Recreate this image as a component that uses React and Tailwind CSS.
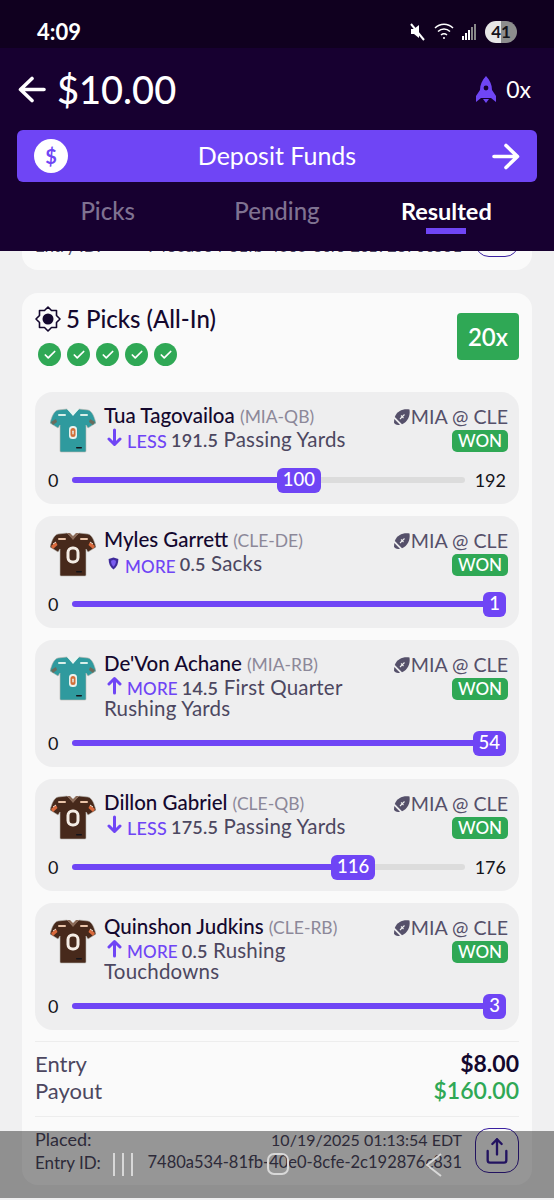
import React from 'react';
import { Check, Share } from 'lucide-react';

const picks = [
  { name: 'Tua Tagovailoa', tag: '(MIA-QB)', team: 'mia', dir: 'down', side: 'LESS', line: '191.5', stat: 'Passing Yards', value: 100, max: 192 },
  { name: 'Myles Garrett', tag: '(CLE-DE)', team: 'cle', dir: 'shield', side: 'MORE', line: '0.5', stat: 'Sacks', value: 1, max: 1 },
  { name: "De'Von Achane", tag: '(MIA-RB)', team: 'mia', dir: 'up', side: 'MORE', line: '14.5', stat: 'First Quarter Rushing Yards', value: 54, max: 54, tall: true },
  { name: 'Dillon Gabriel', tag: '(CLE-QB)', team: 'cle', dir: 'down', side: 'LESS', line: '175.5', stat: 'Passing Yards', value: 116, max: 176 },
  { name: 'Quinshon Judkins', tag: '(CLE-RB)', team: 'cle', dir: 'up', side: 'MORE', line: '0.5', stat: 'Rushing Touchdowns', value: 3, max: 3, tall: true },
];

const Jersey = ({ team }) => {
  const mia = team === 'mia';
  const body = mia ? '#2f9a9e' : '#47291b';
  const stripe = mia ? '#d9efe9' : '#e9c3a8';
  return (
    <svg width="46" height="45" viewBox="0 0 46 45" className="shrink-0">
      <path d="M8 2 L17 1 L23 6 L29 1 L38 2 C42 3 44 8 46 15 L38 20 L36 17 L36 43 Q36 44 35 44 L11 44 Q10 44 10 43 L10 17 L8 20 L0 15 C2 8 4 3 8 2 Z" fill={body} stroke="#b9b5ae" strokeWidth="0.6" />
      <path d="M17 1 L23 8 L29 1 L26 1 L23 4 L20 1 Z" fill={mia ? '#e9f5f2' : '#8a6a58'} />
      <rect x="8" y="6" width="8" height="2" rx="1" fill={stripe} />
      <rect x="30" y="6" width="8" height="2" rx="1" fill={stripe} />
      {mia ? (
        <>
          <path d="M1 14 L6 11 L7 14 L3 17 Z" fill="#6b6b5c" />
          <path d="M45 14 L40 11 L39 14 L43 17 Z" fill="#6b6b5c" />
          <rect x="19" y="18" width="8" height="13" rx="3.5" fill="#e9f2ee" />
          <rect x="20.5" y="20" width="5" height="9" rx="2.5" fill="#d2703a" />
          <rect x="22.3" y="22.5" width="1.4" height="4" rx="0.7" fill="#e9f2ee" />
        </>
      ) : (
        <>
          <path d="M1 14 L6 10 L7.5 13 L3 17 Z" fill="#d9693c" />
          <path d="M45 14 L40 10 L38.5 13 L43 17 Z" fill="#d9693c" />
          <path d="M3 12 L6 10 M43 12 L40 10" stroke="#f3e3d3" strokeWidth="1" />
          <rect x="18" y="16" width="10" height="14" rx="4.5" fill="none" stroke="#f4ece4" strokeWidth="3" />
        </>
      )}
      <rect x="26" y="39" width="6" height="1.5" rx="0.7" fill="#14141a" />
    </svg>
  );
};

const Football = () => (
  <svg width="18" height="18" viewBox="0 0 18 18" className="shrink-0">
    <path d="M16.5 1.5 C10 0.5 4 3 1.8 9 L9 16.2 C14.5 14 17.5 8 16.5 1.5 Z" fill="#55506a" />
    <path d="M1.3 11 L7 16.7 C4 17.4 1.7 16.4 1 14.8 Z" fill="#55506a" />
    <path d="M7 11 L11.5 6.5 M8 7.5 L10.5 10" stroke="#efefef" strokeWidth="1.1" />
  </svg>
);

const DirIcon = ({ dir }) => {
  if (dir === 'shield') {
    return (
      <svg width="13" height="15" viewBox="0 0 16 17" className="shrink-0 -mt-[6px]">
        <path d="M8 1 L14 3 C14 9 12 13 8 16 C4 13 2 9 2 3 Z" fill="#3f2a9a" />
        <path d="M8 4 L11 5 C11 8.5 10 10.5 8 12.5 C6 10.5 5 8.5 5 5 Z" fill="#7a5cf0" />
      </svg>
    );
  }
  return (
    <svg width="15" height="19" viewBox="0 0 15 19" className={`shrink-0 -mt-[6px] ${dir === 'down' ? '' : 'rotate-180'}`} fill="none" stroke="#6f45f5" strokeWidth="3" strokeLinecap="round" strokeLinejoin="round">
      <path d="M7.5 2 V16 M2 11 L7.5 16.5 L13 11" />
    </svg>
  );
};

const BigArrow = ({ flip }) => (
  <svg width="28" height="27" viewBox="0 0 28 27" className={`shrink-0 ${flip ? 'rotate-180' : ''}`} fill="none" stroke="#fff" strokeWidth="3.6" strokeLinecap="round" strokeLinejoin="round">
    <path d="M14 2.5 L2.5 13.5 L14 24.5 M2.5 13.5 H26" />
  </svg>
);

const Slider = ({ value, max }) => {
  const full = value >= max;
  return (
    <div className="flex items-center mt-auto h-[26px]">
      <span className="w-[37px] pl-[13px] shrink-0 text-[18px] text-[#14141a]">0</span>
      <div className="flex-1 flex items-center min-w-0">
        <div
          className={`h-[6px] rounded-l-full bg-[#6f45f5] ${full ? 'flex-1' : 'shrink-0'}`}
          style={full ? undefined : { width: `${(value / max) * 100}%` }}
        />
        <div className="h-[25px] min-w-[23px] px-[6px] rounded-[6px] bg-[#6f45f5] text-white text-[18.5px] font-medium flex items-center justify-center shrink-0">
          {value}
        </div>
        {!full && <div className="h-[6px] flex-1 min-w-0 rounded-r-full bg-[#dcdcdc]" />}
      </div>
      {!full && <span className="w-[54px] pr-[13px] shrink-0 text-right text-[18px] text-[#14141a]">{max}</span>}
      {full && <span className="w-[13px] shrink-0" />}
    </div>
  );
};

const PickRow = ({ pick }) => (
  <div className={`rounded-[18px] bg-[#eeeeef] pt-[11px] pb-[11px] flex flex-col ${pick.tall ? 'h-[127px]' : 'h-[112px]'}`}>
    <div className="flex pr-[11px]">
      <div className="pl-[15px] pr-[8px] pt-[5px] shrink-0"><Jersey team={pick.team} /></div>
      <div className="flex-1 min-w-0">
        <div className="text-[20.5px] leading-[24px] font-medium text-[#14082e] whitespace-nowrap">
          {pick.name} <span className="text-[17.5px] font-normal text-[#8c8899]">{pick.tag}</span>
        </div>
        <div className="text-[20.5px] leading-[20px] tracking-[0.2px] text-[#4c4760] max-w-[265px]">
          <span className="inline-flex items-center gap-[5px] h-[18px] mr-[4px] ml-[3px]">
            <DirIcon dir={pick.dir} />
            <span className={`font-medium text-[#6f45f5] ${pick.side === 'MORE' ? 'text-[17px]' : 'text-[18px]'}`}>{pick.side}</span>
          </span>
          <span className="text-[18px] font-semibold">{pick.line}</span> {pick.stat}
        </div>
      </div>
      <div className="flex flex-col items-end shrink-0 pt-[2px]">
        <div className="flex items-center text-[19.6px] leading-[24px] text-[#55506a] whitespace-nowrap">
          <Football />MIA @ CLE
        </div>
        <div className="mt-[1px] h-[22px] w-[56px] rounded-[5px] bg-[#2fa855] text-white text-[17px] font-medium flex items-center justify-center">WON</div>
      </div>
    </div>
    <Slider value={pick.value} max={pick.max} />
  </div>
);

const NavOverlay = () => (
  <div className="absolute left-0 right-0 top-[1131px] h-[67px] bg-black/40 pt-[22px]">
    <div className="flex items-start h-[23px] pl-[113px]">
      <div className="flex gap-[7px] w-[154px]">
        <span className="w-[2px] h-[23px] bg-[#d8d8d8]" />
        <span className="w-[2px] h-[23px] bg-[#d8d8d8]" />
        <span className="w-[2px] h-[23px] bg-[#d8d8d8]" />
      </div>
      <span className="w-[22px] h-[22px] rounded-[7px] border-2 border-[#d8d8d8]" />
      <svg width="16" height="24" viewBox="0 0 16 24" className="ml-[137px]">
        <path d="M15 1 L1 12 L15 23" fill="none" stroke="#d8d8d8" strokeWidth="2" />
      </svg>
    </div>
  </div>
);

export default function App() {
  return (
    <div className="relative h-[1200px] overflow-hidden bg-[#f0f0f1] [font-family:Lato,sans-serif]">
      <header className="h-[251px] bg-[#170030] text-white">
        <div className="h-[48px] bg-[#10001f] flex items-center pl-[37px] pr-[37px] pt-[15px]">
          <span className="text-[22px] font-bold">4:09</span>
          <div className="ml-auto flex items-center gap-[8px]">
            <svg width="17" height="18" viewBox="0 0 17 18">
              <path d="M2 6 H5 L10 2 V15 L5 11 H2 Z" fill="#fff" />
              <path d="M2 1 L15 17" stroke="#fff" strokeWidth="2" />
            </svg>
            <svg width="20" height="17" viewBox="0 0 20 17" fill="none" stroke="#fff" strokeWidth="1.5">
              <path d="M1 5 C6 0 14 0 19 5" />
              <path d="M4 8.5 C7.5 5 12.5 5 16 8.5" />
              <path d="M7 12 C9 10.3 11 10.3 13 12" />
              <circle cx="10" cy="15" r="1" fill="#fff" stroke="none" />
            </svg>
            <svg width="15" height="16" viewBox="0 0 15 16" fill="#fff">
              <rect x="0" y="12" width="2" height="4" />
              <rect x="3" y="9" width="2" height="7" />
              <rect x="6" y="6" width="2" height="10" />
              <rect x="9" y="3" width="2" height="13" fill="#888" />
              <rect x="12" y="0" width="2" height="16" fill="#888" />
            </svg>
            <div className="w-[32px] h-[22px] rounded-full overflow-hidden flex items-center justify-center text-[#14141a] text-[17px] font-bold bg-[linear-gradient(90deg,#e6e6e6_50%,#8d8d8d_50%)]">41</div>
          </div>
        </div>
        <div className="h-[82px] flex items-center pl-[18px] pr-[23px]">
          <BigArrow />
          <span className="ml-[11px] text-[38px] font-medium">$10.00</span>
          <svg width="22" height="27" viewBox="0 0 22 27" className="ml-auto" fill="#6f45f5">
            <path d="M11 0 C15 4 17 9 17 14 L21 20 L21 26 L16 22 L6 22 L1 26 L1 20 L5 14 C5 9 7 4 11 0 Z" />
            <path d="M8 23 H14 L11 27 Z" />
            <circle cx="11" cy="12" r="2.4" fill="#170030" />
          </svg>
          <span className="ml-[9px] text-[23px]">0x</span>
        </div>
        <div className="mx-[17px] h-[52px] rounded-[6px] bg-[#6f45f5] flex items-center pl-[17px] pr-[17px]">
          <div className="w-[34px] h-[34px] rounded-full bg-white text-[#6f45f5] text-[20px] font-bold flex items-center justify-center">$</div>
          <span className="flex-1 text-center text-[25px] pr-[6px]">Deposit Funds</span>
          <BigArrow flip />
        </div>
        <div className="mx-[23px] grid grid-cols-3 text-center text-[24px] leading-[30px] font-medium mt-[14px]">
          <span className="text-[#7f7291]">Picks</span>
          <span className="text-[#7f7291]">Pending</span>
          <div className="flex flex-col items-center">
            <span className="font-bold text-[23.5px]">Resulted</span>
            <span className="w-[40px] h-[6px] bg-[#6f45f5] mt-[2px]" />
          </div>
        </div>
      </header>

      <main className="px-[22px]">
        <div className="h-[19px] rounded-b-[16px] bg-[#fafafa] overflow-hidden flex px-[13px] text-[#4c4760] text-[16.5px] leading-[20px] whitespace-nowrap">
          <div className="flex-1 flex justify-between pr-[13px] -mt-[15px] h-[20px]">
            <span className="text-[17px]">Entry ID:</span>
            <span>7480a534-81fb-40e0-8cfe-2c192876c831</span>
          </div>
          <div className="w-[44px] h-[44px] -mt-[38px] rounded-[14px] border border-[#3a20a0] shrink-0" />
        </div>

        <section className="mt-[23px] h-[892px] rounded-[16px] bg-[#fafafa] px-[13px] pt-[12px]">
          <div className="flex justify-between h-[87px]">
            <div>
              <div className="flex items-center gap-[5px] text-[24px] leading-[28px] font-medium text-[#14082e]">
                <svg width="26" height="26" viewBox="0 0 26 26" className="shrink-0">
                  <path d="M13 1 L16.5 4.5 L21.5 4.5 L21.5 9.5 L25 13 L21.5 16.5 L21.5 21.5 L16.5 21.5 L13 25 L9.5 21.5 L4.5 21.5 L4.5 16.5 L1 13 L4.5 9.5 L4.5 4.5 L9.5 4.5 Z" fill="none" stroke="#14082e" strokeWidth="1.6" strokeLinejoin="round" />
                  <circle cx="13" cy="13" r="5.5" fill="#14082e" />
                </svg>
                5 Picks (All-In)
              </div>
              <div className="flex gap-[6px] mt-[10px] ml-[3px]">
                {picks.map((p) => (
                  <span key={p.name} className="w-[23px] h-[23px] rounded-full bg-[#2fa855] flex items-center justify-center">
                    <Check size={14} strokeWidth={3} className="text-white" />
                  </span>
                ))}
              </div>
            </div>
            <div className="mt-[8px] w-[62px] h-[47px] rounded-[4px] bg-[#2fa855] text-white text-[24px] font-semibold flex items-center justify-center">20x</div>
          </div>
          <div className="flex flex-col gap-[12px]">
            {picks.map((p) => <PickRow key={p.name} pick={p} />)}
          </div>
          <div className="mt-[11px] border-t border-[#ededed] h-[75px] pt-[8px] flex flex-col text-[22px] leading-[27px] text-[#4c4760]">
            <div className="flex justify-between"><span>Entry</span><span className="font-bold text-[23px] text-[#14082e]">$8.00</span></div>
            <div className="flex justify-between"><span>Payout</span><span className="font-semibold text-[23px] text-[#2fa855]">$160.00</span></div>
          </div>
          <div className="border-t border-[#ededed] pt-[11px] flex text-[#4c4760] text-[16px] leading-[23px]">
            <div className="flex-1 pr-[13px] whitespace-nowrap">
              <div className="flex justify-between"><span className="text-[18px]">Placed:</span><span>10/19/2025 01:13:54 EDT</span></div>
              <div className="flex justify-between"><span className="text-[17px]">Entry ID:</span><span className="text-[16.5px]">7480a534-81fb-40e0-8cfe-2c192876c831</span></div>
            </div>
            <div className="w-[44px] h-[45px] rounded-[14px] border border-[#3a20a0] text-[#3a20a0] flex items-center justify-center shrink-0">
              <Share size={28} strokeWidth={2} />
            </div>
          </div>
        </section>
      </main>

      <NavOverlay />
    </div>
  );
}
